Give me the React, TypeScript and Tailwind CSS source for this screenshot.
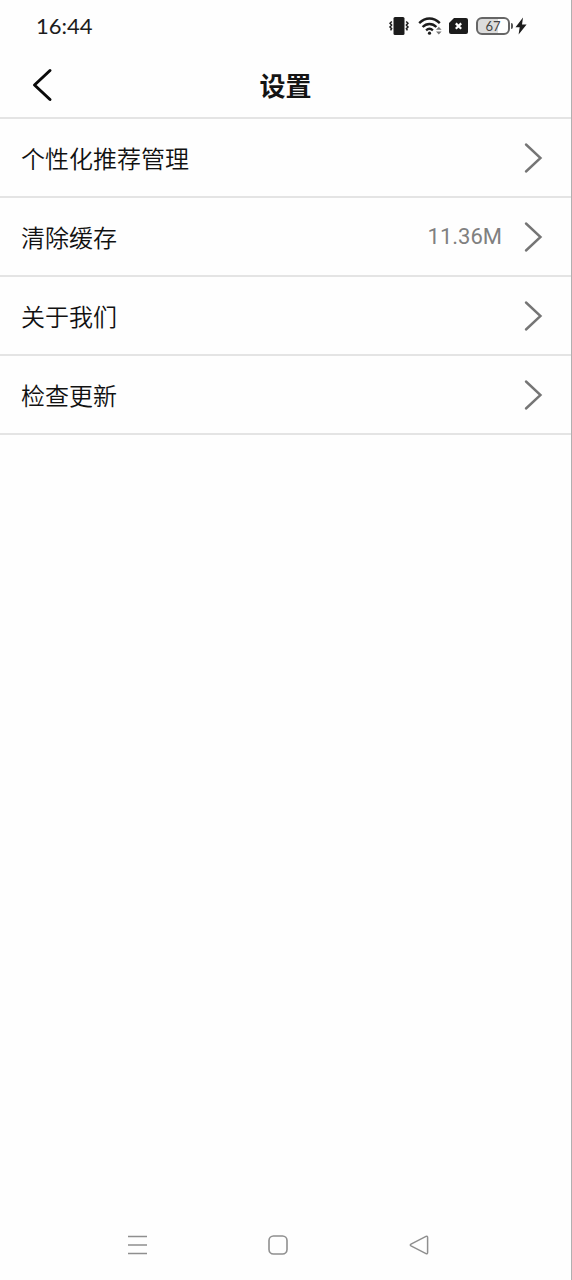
import React from 'react';

interface SettingItem {
  id: string;
  title: string;
  value?: string;
}

const items: SettingItem[] = [
  { id: 'recommend', title: '个性化推荐管理' },
  { id: 'cache', title: '清除缓存', value: '11.36M' },
  { id: 'about', title: '关于我们' },
  { id: 'update', title: '检查更新' },
];

const StatusBar: React.FC = () => (
  <div className="flex h-[52px] items-center justify-between pl-9 pr-11 text-[#1c1c1c]">
    <span className="font-['Lato',sans-serif] text-[22px] leading-7">16:44</span>
    <div className="flex items-center">
      {/* vibration */}
      <svg width="20" height="20" viewBox="0 0 20 20" fill="none" stroke="currentColor" strokeWidth="1.5">
        <rect x="4.5" y="1" width="11" height="18" rx="1.5" fill="currentColor" stroke="none" />
        <path d="M2.8 5.5 1 7.3l1.6 1.8L1 10.9l1.6 1.8-1 1.6M17.2 5.5 19 7.3l-1.6 1.8 1.6 1.8-1.6 1.8 1 1.6" />
      </svg>
      {/* wifi */}
      <svg className="ml-[9px]" width="25" height="20" viewBox="0 0 25 20" fill="none" stroke="currentColor" strokeWidth="2.4">
        <path d="M1.2 7.2C7.5 1 15.5 1 21.8 7.2M4.6 11c4-4 9.8-4 13.8 0M8.1 14.3c2-1.8 4.8-1.8 6.8 0" />
        <circle cx="11.5" cy="17.2" r="1.6" fill="currentColor" stroke="none" />
        <path d="m18 13.8 2.8-3 2.8 3zM18 15.4l2.8 3 2.8-3z" fill="#777" stroke="none" />
      </svg>
      {/* no sim */}
      <svg className="ml-1.5" width="20" height="18" viewBox="0 0 20 18">
        <path d="M5 1h12a2 2 0 0 1 2 2v12a2 2 0 0 1-2 2H2a2 2 0 0 1-2-2V6z" fill="currentColor" />
        <path d="m6.8 6.4 5.4 5.4m0-5.4-5.4 5.4" stroke="#fff" strokeWidth="2.2" />
      </svg>
      <div className="ml-[7px] flex h-[18px] w-[34px] items-center justify-center rounded-[6px] border-2 border-[#666] bg-linear-to-r from-[#dcdcdc] from-67% to-white to-67% font-['Lato',sans-serif] text-[13px] leading-4 text-[#444]">
        67
      </div>
      <div className="ml-px h-1.5 w-0.5 rounded-r bg-[#555]" />
      <svg className="ml-0.5" width="12" height="18" viewBox="0 0 12 18" fill="currentColor">
        <path d="M8 .5.5 10.2h4.2L3.6 17.5 11.6 7.4H7z" />
      </svg>
    </div>
  </div>
);

const Header: React.FC = () => (
  <header className="grid h-[67px] grid-cols-[1fr_auto_1fr] items-center border-b-2 border-[#e4e4e4]">
    <button type="button" aria-label="返回" className="w-fit pl-8">
      <svg width="22" height="34" viewBox="0 0 22 34" fill="none" stroke="#0a0a0a" strokeWidth="3" strokeLinecap="round" strokeLinejoin="round">
        <path d="M18 2.5 2.5 17 18 31.5" />
      </svg>
    </button>
    <h1 className="text-[26px] leading-9 font-bold text-[#141414]">设置</h1>
  </header>
);

const SettingRow: React.FC<{ item: SettingItem }> = ({ item }) => (
  <li className="border-b-2 border-[#e4e4e4]">
    <button type="button" className="flex h-[77px] w-full items-center pl-[21px] pr-7 text-left">
      <span className="flex-1 text-2xl font-[350] text-[#111]">{item.title}</span>
      {item.value && (
        <span className="font-['Roboto',sans-serif] text-[22px] leading-8 text-[#808080]">{item.value}</span>
      )}
      <svg className="ml-[22px]" width="19" height="32" viewBox="0 0 19 32" fill="none" stroke="#757575" strokeWidth="2.4" strokeLinecap="round" strokeLinejoin="miter">
        <path d="M2 2.5 16.5 16 2 29.5" />
      </svg>
    </button>
  </li>
);

const NavigationBar: React.FC = () => (
  <nav className="grid h-[70px] grid-cols-[1fr_1fr_1fr] items-center pl-[68px] pr-[82px]">
    <button type="button" aria-label="最近任务" className="justify-self-center">
      <svg width="20" height="20" viewBox="0 0 20 20" stroke="#8f8f8f" strokeWidth="1.6">
        <path d="M0 1.5h19M0 10h19M0 18.5h19" />
      </svg>
    </button>
    <button type="button" aria-label="主页" className="justify-self-center">
      <svg width="20" height="20" viewBox="0 0 20 20" fill="none" stroke="#8f8f8f" strokeWidth="1.6">
        <rect x="1" y="1" width="18" height="18" rx="4.5" />
      </svg>
    </button>
    <button type="button" aria-label="返回上一页" className="justify-self-center">
      <svg width="20" height="20" viewBox="0 0 20 20" fill="none" stroke="#8f8f8f" strokeWidth="1.5" strokeLinejoin="round">
        <path d="M17 1.4 2 9.1q-1.4.9 0 1.8l15 7.7q1.6.6 1.6-1V2.4q0-1.6-1.6-1z" />
      </svg>
    </button>
  </nav>
);

const App: React.FC = () => {
  return (
    <div className="flex min-h-screen flex-col border-r border-[#b0b0b0] bg-[#fefefe] font-['Noto_Sans_CJK_SC',sans-serif]">
      <StatusBar />
      <Header />
      <main className="flex-1">
        <ul>
          {items.map((item) => (
            <SettingRow key={item.id} item={item} />
          ))}
        </ul>
      </main>
      <NavigationBar />
    </div>
  );
};

export default App;
